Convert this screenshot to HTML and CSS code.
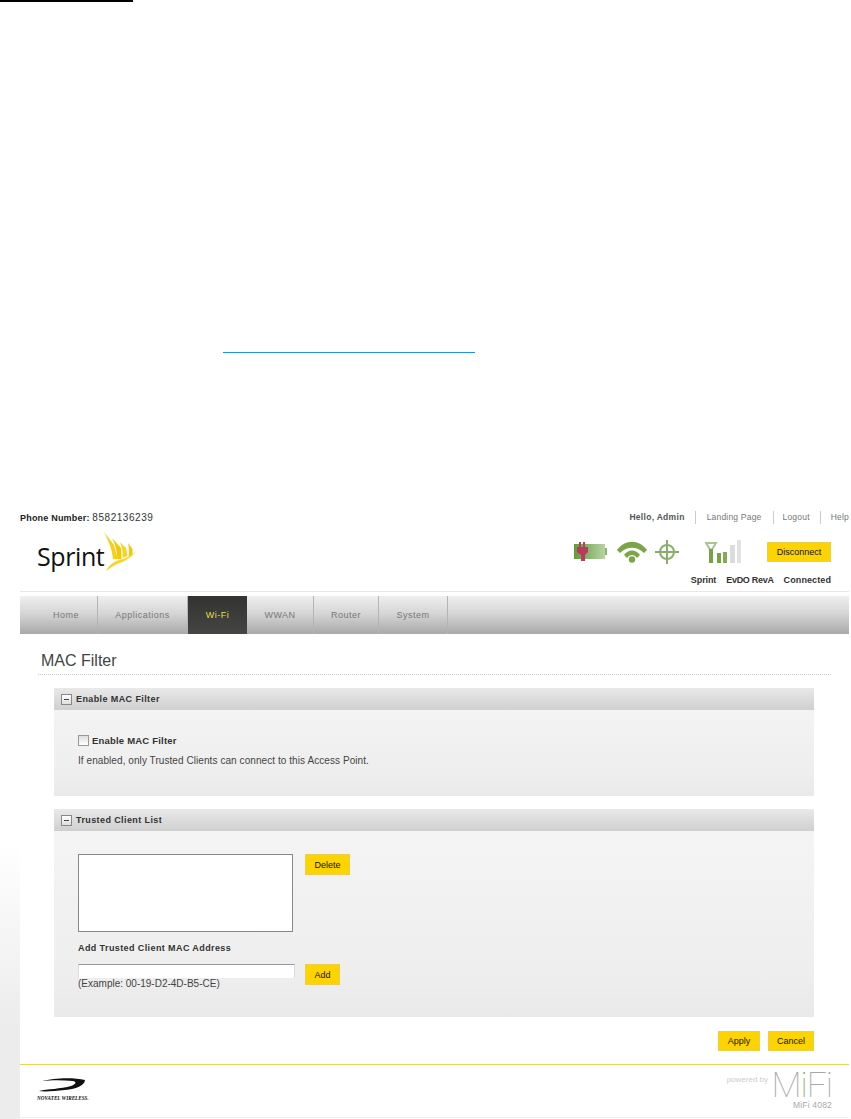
FILE: index.html
```html
<!DOCTYPE html>
<html lang="en">
<head>
<meta charset="utf-8">
<title>MAC Filter</title>
<link rel="stylesheet" href="styles.css">
</head>
<body>
<div class="doc-rule"></div>
<div class="doc-link"></div>
<div class="screen">
  <div class="gutter"></div>
  <div class="app">
    <header class="top">
      <div class="phone"><b>Phone Number:</b> <span class="phone-num">8582136239</span></div>
      <nav class="user">
        <span class="hello">Hello, Admin</span>
        <a class="user-link first">Landing Page</a>
        <a class="user-link logout">Logout</a>
        <a class="user-link last">Help</a>
      </nav>
    </header>
    <div class="brand">
      <div class="sprint">
        <span class="sprint-word">Sprint</span>
        <svg class="wings" width="34" height="40" viewBox="0 0 34 40">
          <path fill="#f4cf1c" d="M1 0L11 13L15 27L10 27C9 16 5 8 1 0Z"/>
          <path fill="#f2c80f" d="M9 6L18 16L18.500 27L14.500 27C14 18 12 12 9 6Z"/>
          <path fill="#f6d528" d="M17 10L23 16L24.500 24L19.500 26C20 20 19 15 17 10Z"/>
          <path fill="#f2c80f" d="M25 11L29.500 17L29.500 23L25.500 25C26.500 21 26 16 25 11Z"/>
          <path fill="#f6d528" d="M34 18C30 24 22 30 14 32C10 34 6 37 3 39C7 31 14 28 20 27C26 25 31 22 34 18Z"/>
        </svg>
      </div>
      <div class="status">
        <div class="status-icons">
          <svg class="battery" width="33" height="20" viewBox="0 0 33 20">
            <defs><linearGradient id="bat" x1="0" x2="1" y1="0" y2="0"><stop offset="0" stop-color="#5f9b3e"/><stop offset="1" stop-color="#b9d2a3"/></linearGradient></defs>
            <rect x="0" y="2" width="31" height="15" fill="url(#bat)"/>
            <rect x="31" y="6" width="2" height="7" fill="#8fb36f"/>
            <path fill="#b83a5c" d="M5 0h2v5h2V0h2v5h3v5l-3 3v6H7v-6l-4-3V5h2Z"/>
          </svg>
          <svg class="wifi" width="30" height="22" viewBox="0 0 30 22">
            <path fill="#7aa648" d="M0 9C8 -2 22 -2 30 9L27 12C20 5 10 5 3 12Z"/>
            <path fill="#7aa648" d="M7 14C11 8 19 8 23 14L20 17C17 13 13 13 10 17Z"/>
            <circle cx="15" cy="18.5" r="3.2" fill="#7aa648"/>
          </svg>
          <svg class="gps" width="24" height="24" viewBox="0 0 24 24">
            <g fill="none" stroke="#8cae6c" stroke-width="2">
              <circle cx="12" cy="12" r="7"/>
              <path d="M12 0v24M0 12h24"/>
            </g>
          </svg>
          <svg class="signal" width="37" height="24" viewBox="0 0 37 24">
            <path fill="none" stroke="#a9c48c" stroke-width="2" d="M1 4h10L6 12Z"/>
            <rect x="4" y="10" width="4" height="14" fill="#76a344"/>
            <rect x="12" y="14" width="4" height="10" fill="#76a344"/>
            <rect x="18" y="13" width="4" height="11" fill="#83ab57"/>
            <rect x="25" y="6" width="5" height="18" fill="#dcdcdc"/>
            <rect x="32" y="1" width="4" height="23" fill="#e2e2e2"/>
          </svg>
          <button class="btn btn-disconnect">Disconnect</button>
        </div>
        <div class="status-text">
          <span>Sprint</span><span class="st-net">EvDO RevA</span><span class="st-conn">Connected</span>
        </div>
      </div>
    </div>
    <nav class="tabs">
      <a class="tab tab-home">Home</a>
      <a class="tab tab-apps">Applications</a>
      <a class="tab tab-active">Wi-Fi</a>
      <a class="tab tab-wwan">WWAN</a>
      <a class="tab tab-router">Router</a>
      <a class="tab tab-system">System</a>
    </nav>
    <main class="content">
      <h1 class="title">MAC Filter</h1>
      <section class="panel panel-enable">
        <h2 class="panel-head"><span class="toggle"></span>Enable MAC Filter</h2>
        <div class="panel-body">
          <label class="check-row"><span class="checkbox"></span>Enable MAC Filter</label>
          <p class="hint">If enabled, only Trusted Clients can connect to this Access Point.</p>
        </div>
      </section>
      <section class="panel panel-list">
        <h2 class="panel-head"><span class="toggle"></span>Trusted Client List</h2>
        <div class="panel-body">
          <div class="list-row">
            <div class="listbox"></div>
            <button class="btn btn-delete">Delete</button>
          </div>
          <div class="field-label">Add Trusted Client MAC Address</div>
          <div class="add-row">
            <div class="add-field">
              <div class="textbox"></div>
              <div class="example">(Example: 00-19-D2-4D-B5-CE)</div>
            </div>
            <button class="btn btn-add">Add</button>
          </div>
        </div>
      </section>
      <div class="actions">
        <button class="btn btn-apply">Apply</button>
        <button class="btn btn-cancel">Cancel</button>
      </div>
    </main>
    <footer class="footer">
      <div class="novatel">
        <svg width="46" height="14" viewBox="0 0 46 14">
          <path fill="#111" d="M3 3C14 0 34 -1 46 2C46 7 38 11 26 12C16 13 6 14 0 13C8 11 22 11 32 8C37 6 38 4 34 3C24 2 12 2 3 3Z"/>
        </svg>
        <span class="novatel-word">NOVATEL WIRELESS<small>.</small></span>
      </div>
      <div class="mifi">
        <span class="powered">powered by</span>
        <div class="mifi-mark">
          <span class="mifi-word">M<i>i</i>F<u>i</u></span>
          <span class="mifi-model">MiFi 4082</span>
        </div>
      </div>
    </footer>
  </div>
</div>
</body>
</html>
```

FILE: styles.css
```css
* { box-sizing: border-box; }
html, body { margin: 0; padding: 0; background: #fff; }
body {
  width: 851px;
  height: 1119px;
  overflow: hidden;
  font-family: "Liberation Sans", Arial, sans-serif;
  color: #333;
}
.doc-rule { width: 133px; height: 2px; background: #000; }
.doc-link { width: 252px; height: 1px; margin: 350px 0 0 223px; background: #1f8fe8; }
.screen { display: flex; margin-top: 150px; height: 616px; }
.gutter {
  width: 20px;
  background: linear-gradient(#fff 0, #fff 55%, #ececec 85%, #ececec 100%);
}
.app { width: 829px; display: flex; flex-direction: column; background: #fff; }

.top { display: flex; justify-content: space-between; height: 25px; padding-top: 7px; font-size: 9px; }
.phone { color: #333; letter-spacing: 0.2px; line-height: 14px; margin-top: 1px; }
.phone b { color: #222; }
.phone-num { font-size: 10px; letter-spacing: 0.55px; }
.user { display: flex; height: 13px; margin-top: 1px; line-height: 12px; color: #666; white-space: nowrap; font-size: 8.5px; }
.hello { font-weight: bold; color: #555; padding-right: 10px; font-size: 8.5px; letter-spacing: 0.3px; }
.user-link { color: #777; border-left: 1px solid #ccc; padding: 0 11px; letter-spacing: 0.2px; }
.user-link.logout { padding: 0 10px 0 9px; }
.user-link.last { padding: 0 0 0 10px; }

.brand { display: flex; justify-content: space-between; height: 64px; border-bottom: 1px solid #e8e8e8; }
.sprint { display: flex; align-items: flex-start; padding: 4px 0 0 17px; }
.sprint-word { font-family: "Open Sans", sans-serif; font-size: 25px; line-height: 38px; color: #111; margin-top: 5px; width: 66px; letter-spacing: -0.4px; }
.wings { display: block; }
.status { width: 275px; display: flex; flex-direction: column; }
.status-icons { display: flex; align-items: flex-start; height: 47px; padding-top: 14px; }
.wifi { margin: -1px 0 0 10px; }
.gps { margin: -2px 0 0 8px; }
.signal { margin: -3px 0 0 26px; }
.btn {
  font-family: "Liberation Sans", Arial, sans-serif;
  font-size: 9px;
  color: #111;
  background: #fdd300;
  border: 1px solid #ecce4e;
  padding: 0;
  height: 21px;
  display: block;
}
.btn-disconnect { width: 64px; height: 20px; margin-left: 25px; }
.status-text { display: flex; justify-content: flex-end; gap: 10px; font-size: 9px; font-weight: bold; color: #333; padding-right: 18px; margin-top: -1px; line-height: 12px; white-space: nowrap; letter-spacing: -0.1px; }
.st-net { letter-spacing: -0.3px; }
.st-conn { letter-spacing: 0.1px; }

.tabs {
  display: flex;
  height: 38px;
  margin-top: 4px;
  background: linear-gradient(#efefef, #d6d6d6 45%, #a9a9a9);
  font-size: 9px;
  letter-spacing: 0.5px;
  color: #777;
  line-height: 38px;
}
.tab { border-right: 1px solid #b4b4b4; text-align: center; }
.tab-home { width: 78px; padding-left: 15px; }
.tab-apps { width: 90px; }
.tab-active { width: 59px; background: linear-gradient(#333331, #454543); color: #e9de3c; border-right: 0; }
.tab-wwan { width: 67px; }
.tab-router { width: 65px; }
.tab-system { width: 69px; }

.content { flex: 1; padding: 0 36px 0 18px; }
.title {
  margin: 0 -18px 0 0;
  padding: 18px 0 5px 3px;
  font-size: 16px;
  line-height: 18px;
  font-weight: normal;
  color: #444;
  border-bottom: 1px dotted #ccc;
  height: 41px;
}
.panel { margin: 13px 0 0 16px; width: 760px; background: linear-gradient(#f5f5f5, #eee 80%, #e9e9e9); }
.panel-head {
  margin: 0;
  height: 22px;
  padding-left: 7px;
  display: flex;
  align-items: center;
  font-size: 9px;
  font-weight: bold;
  color: #333;
  letter-spacing: 0.4px;
  background: linear-gradient(#e9e9e9, #cfcfcf);
}
.toggle { width: 11px; height: 11px; margin-right: 4px; border: 1px solid #888; background: linear-gradient(#fff, #ddd); position: relative; }
.toggle::after { content: ""; position: absolute; left: 2px; right: 2px; top: 4px; height: 1px; background: #444; }
.panel-body { padding-left: 24px; }
.panel-enable .panel-body { height: 86px; padding-top: 24px; }
.panel-list .panel-body { height: 186px; padding-top: 23px; }
.check-row { display: flex; align-items: center; font-size: 9.5px; font-weight: bold; color: #333; height: 13px; letter-spacing: 0.2px; }
.checkbox { width: 11px; height: 11px; border: 1px solid #999; background: linear-gradient(#ddd, #fff); margin-right: 3px; }
.hint { margin: 8px 0 0; font-size: 10px; line-height: 12px; color: #444; letter-spacing: 0.07px; }
.list-row { display: flex; align-items: flex-start; gap: 12px; }
.listbox { width: 215px; height: 78px; border: 1px solid #888; background: #fff; }
.btn-delete { width: 45px; }
.field-label { margin-top: 10px; font-size: 9px; font-weight: bold; line-height: 12px; color: #333; letter-spacing: 0.4px; }
.add-row { display: flex; align-items: flex-start; margin-top: 10px; gap: 10px; }
.add-field { width: 217px; }
.textbox { height: 14px; background: #fff; border-top: 1px solid #999; border-left: 1px solid #ddd; border-right: 1px solid #ddd; }
.example { font-size: 10px; line-height: 12px; color: #444; }
.btn-add { width: 35px; }
.actions { display: flex; justify-content: flex-end; gap: 8px; width: 776px; margin-top: 14px; }
.btn-apply { width: 42px; height: 20px; }
.btn-cancel { width: 46px; height: 20px; }

.footer {
  height: 54px;
  margin-bottom: 1px;
  flex: none;
  border-top: 1px solid #e6d35a;
  border-bottom: 1px solid #eee;
  display: flex;
  justify-content: space-between;
}
.novatel { padding: 13px 0 0 17px; width: 80px; }
.novatel svg { display: block; margin-left: 2px; }
.novatel-word { display: block; font-family: "Liberation Serif", serif; font-weight: bold; font-style: italic; font-size: 5.2px; color: #111; line-height: 8px; margin-top: 2px; white-space: nowrap; }
.mifi { display: flex; padding: 8px 17px 0 0; align-items: flex-start; }
.powered { font-size: 8px; color: #ccc; margin-top: 2px; margin-right: 4px; }
.mifi-mark { display: flex; flex-direction: column; align-items: flex-end; width: 60px; }
.mifi-word { font-family: Roboto, "Liberation Sans", sans-serif; font-size: 35px; line-height: 26px; color: #a8a8a8; letter-spacing: -1px; font-weight: 100; white-space: nowrap; }
.mifi-word i { font-style: normal; color: #8fb06a; }
.mifi-word u { text-decoration: none; }
.mifi-model { font-size: 8.5px; line-height: 9px; color: #aaa; margin-top: 2px; letter-spacing: 0.2px; }
```
